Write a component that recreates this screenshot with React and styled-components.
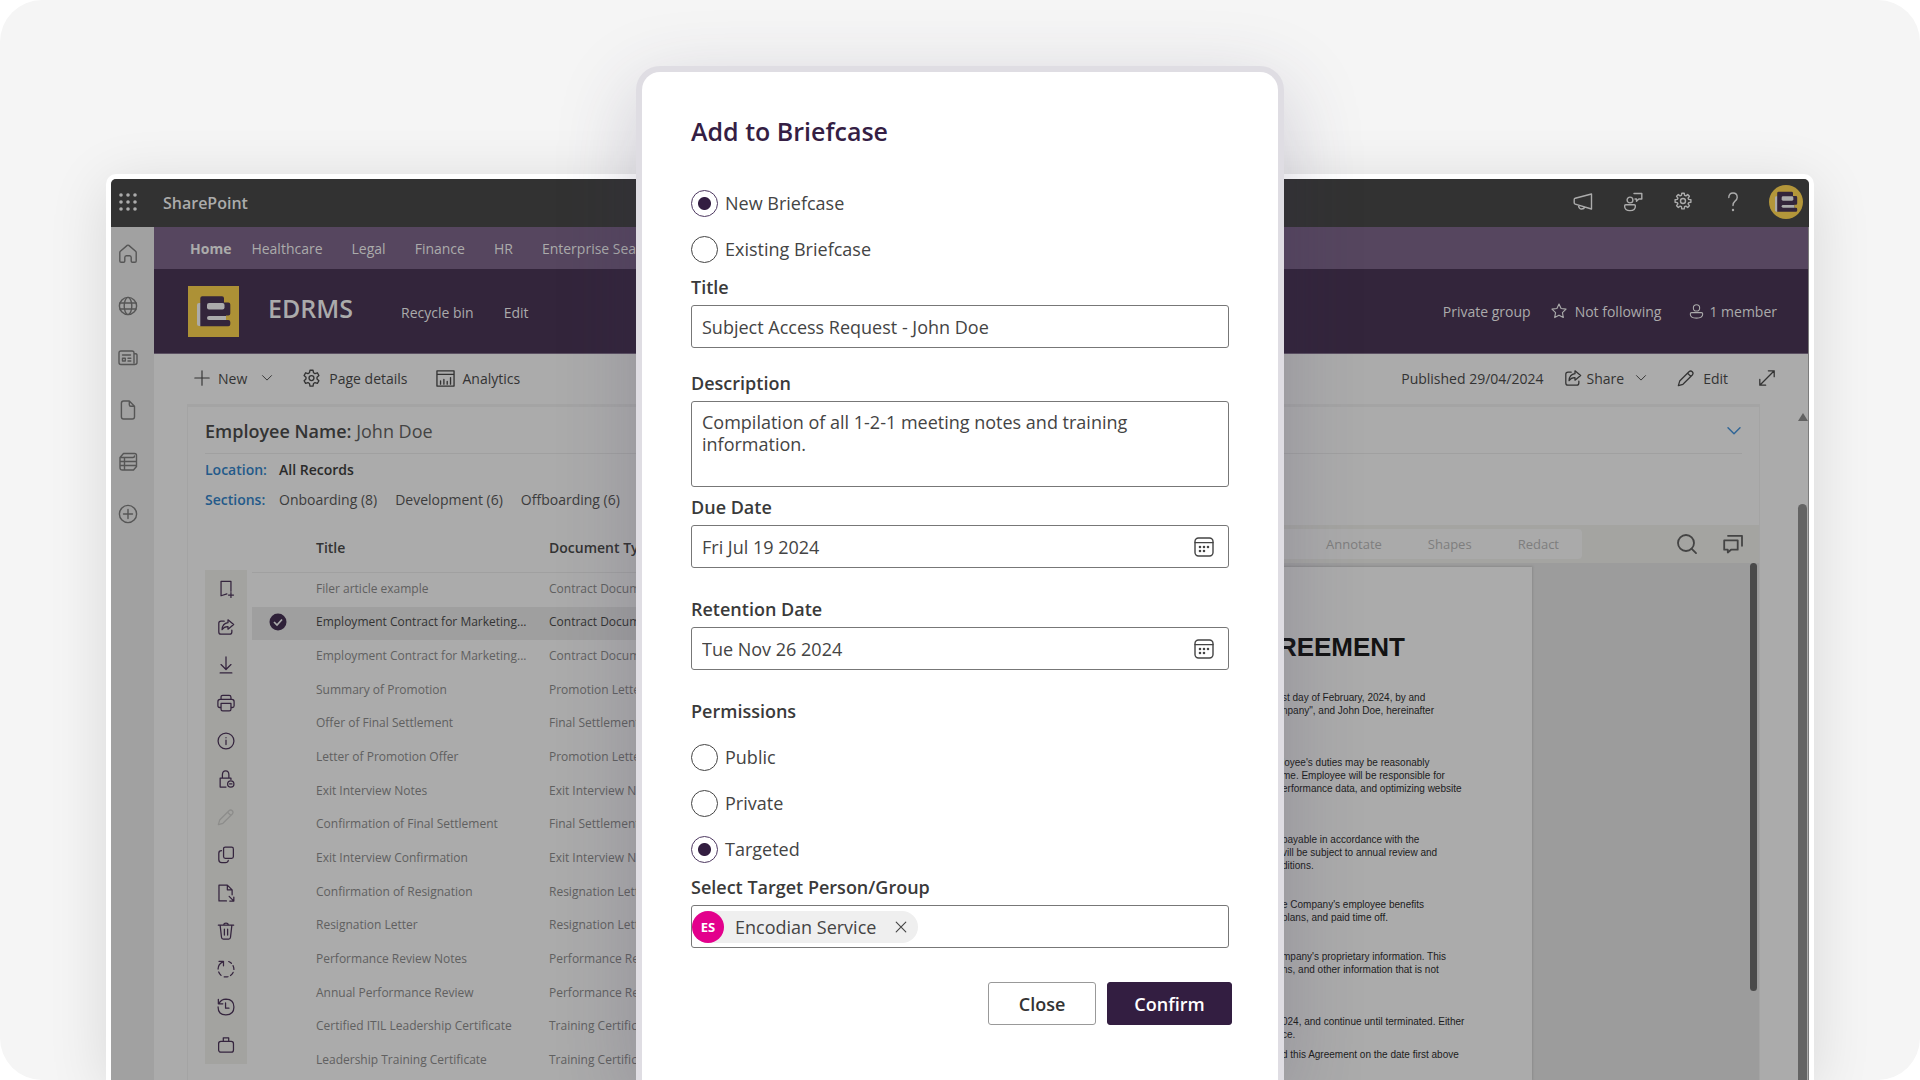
import { useState } from "react";
import styled, { createGlobalStyle } from "styled-components";

const GlobalStyle = createGlobalStyle`
    *, *::before, *::after { box-sizing: border-box; }
    body {
        margin: 0;
        background: #fff;
        font-family: "Open Sans", "Noto Sans", sans-serif;
        color: #333;
    }
    button, input, textarea { font: inherit; color: inherit; }
    a { color: inherit; text-decoration: none; }
    h1, h2, p, fieldset { margin: 0; padding: 0; border: 0; }
    svg { display: block; flex: none; }
`;

const Stage = styled.div`
    position: relative;
    display: flex;
    height: 100vh;
    padding: 174px 106px 0;
    overflow: hidden;
    border-radius: 42px;
    background: #f5f5f5;
`;

/* ---------- SharePoint window ---------- */

const Window = styled.div`
    flex: 1;
    min-width: 0;
    display: flex;
    flex-direction: column;
    border: 5px solid #fff;
    border-bottom: 0;
    border-radius: 10px 10px 0 0;
    background: #ababab;
    box-shadow: 0 10px 60px rgba(0, 0, 0, 0.12);
    overflow: hidden;
`;

const TopBar = styled.header`
    flex: none;
    display: flex;
    align-items: center;
    height: 48px;
    padding: 0 6px 2px 7px;
    background: #323232;
    color: #ababab;
`;

const Product = styled.a`
    margin: 2px auto 0 25px;
    font-size: 16px;
    font-weight: 600;
`;

const TopActions = styled.div`
    display: flex;
    align-items: center;
    gap: 30px;
    margin-right: 26px;
`;

const IconButton = styled.button`
    display: flex;
    padding: 0;
    border: 0;
    background: none;
    color: ${({ $muted }) => ($muted ? "#8d8d8b" : "inherit")};
`;

const Body = styled.div`
    flex: 1;
    min-height: 0;
    display: flex;
`;

const Rail = styled.nav`
    flex: none;
    width: 43px;
    display: flex;
    flex-direction: column;
    align-items: center;
    gap: 32px;
    padding: 17px 9px 0 0;
    background: #a1a1a1;
    color: #565656;
`;

const Main = styled.main`
    flex: 1;
    min-width: 0;
    display: flex;
    flex-direction: column;
    border-right: 1px solid #7c7c7c;
`;

const HubNav = styled.nav`
    flex: none;
    display: flex;
    align-items: center;
    gap: 20px;
    height: 42px;
    padding: 0 36px;
    background: #56465f;
    color: #ababab;
    font-size: 14px;
`;

const HubLink = styled.a`
    padding-right: ${({ $active }) => ($active ? 0 : 9)}px;
    font-weight: ${({ $active }) => ($active ? 700 : 400)};
`;

const SiteHeader = styled.div`
    flex: none;
    display: flex;
    align-items: center;
    height: 85px;
    padding: 0 31px 0 34px;
    border-bottom: 1px solid #5b5062;
    background: #33253b;
    color: #ababab;
    font-size: 14px;
`;

const SiteName = styled.h1`
    margin: 0 48px 6px 29px;
    font-size: 25px;
    line-height: 32px;
    font-weight: 600;
`;

const SiteLinks = styled.div`
    display: flex;
    gap: 30px;
    margin-right: auto;
    padding-top: 2px;
`;

const Meta = styled.span`
    display: flex;
    align-items: center;
    gap: ${({ $gap }) => $gap || 8}px;
    margin-left: ${({ $before }) => $before || 0}px;
`;

const CommandBar = styled.div`
    flex: none;
    display: flex;
    align-items: center;
    height: 50px;
    padding: 0 32px 2px 40px;
    font-size: 14px;
`;

const Command = styled.button`
    display: flex;
    align-items: center;
    gap: ${({ $gap }) => $gap || 8}px;
    margin-right: ${({ $after }) => $after || 0}px;
    padding: 0;
    border: 0;
    background: none;
`;

const Caret = styled.span`
    margin-left: 6px;
`;

const Published = styled.span`
    margin: 0 20px 0 auto;
`;

const Content = styled.div`
    flex: 1;
    min-height: 0;
    display: flex;
    justify-content: space-between;
    padding-left: 33px;
`;

const Card = styled.section`
    flex: 1;
    min-width: 0;
    margin-right: 37px;
    display: flex;
    flex-direction: column;
    border: solid #a4a4a4;
    border-width: 3px 1px 0;
`;

const PageScroll = styled.div`
    flex: none;
    width: 11px;
    display: flex;
    flex-direction: column;
    align-items: center;
    gap: 83px;
    padding-top: 9px;

    &::before {
        content: "";
        border: 5px solid transparent;
        border-top: 0;
        border-bottom: 8px solid #626262;
    }

    &::after {
        content: "";
        flex: 1;
        width: 9px;
        border-radius: 5px 5px 0 0;
        background: #646464;
    }
`;

const Employee = styled.div`
    flex: none;
    display: flex;
    align-items: center;
    justify-content: space-between;
    height: 47px;
    margin: 0 17px;
    padding-top: 1px;
    border-bottom: 1px solid #a0a0a0;
    font-size: 18px;
    color: #444;

    b { font-weight: 600; color: #333; }
`;

const Filters = styled.div`
    flex: none;
    display: grid;
    grid-template-columns: 74px 1fr;
    grid-auto-rows: 30px;
    align-items: center;
    height: 71px;
    padding: 0 17px;
    font-size: 14px;
    color: #3c3c3c;
`;

const FilterName = styled.span`
    font-weight: 600;
    color: #235a8a;
`;

const FilterValues = styled.div`
    display: flex;
    gap: 18px;

    b { font-weight: 600; color: #2a2a2a; }
`;

const Split = styled.div`
    flex: 1;
    min-height: 0;
    display: grid;
    grid-template-columns: 1fr 800px;
`;

const Records = styled.div`
    min-width: 0;
    display: flex;
    align-items: flex-start;
    padding-left: 17px;
    overflow: hidden;
`;

const Strip = styled.div`
    flex: none;
    display: grid;
    grid-auto-rows: 38px;
    place-items: center;
    width: 42px;
    margin: 45px 5px 0 0;
    background: #a3a3a0;
    color: #35253e;
`;

const Table = styled.table`
    flex: none;
    width: 720px;
    height: 553px;
    table-layout: fixed;
    border-collapse: collapse;
    font-size: 12px;
    line-height: 18px;
    color: #606060;

    th, td { padding: 0; text-align: left; white-space: nowrap; }
    td { padding-bottom: 2px; }
    th {
        height: 47px;
        border-bottom: 1px solid #a0a0a0;
        font-size: 14px;
        font-weight: 600;
        color: #333;
    }
    th:nth-child(1) { width: 64px; }
    th:nth-child(2) { width: 233px; }
`;

const Row = styled.tr`
    background: ${({ $selected }) => ($selected ? "#9f9f9f" : "none")};
    color: ${({ $selected }) => ($selected ? "#333" : "inherit")};
`;

const Tick = styled.span`
    display: flex;
    padding-left: 17px;
`;

/* ---------- document viewer ---------- */

const Viewer = styled.div`
    min-width: 0;
    display: flex;
    flex-direction: column;
    background: #9c9c9c;
`;

const ViewerBar = styled.div`
    flex: none;
    display: flex;
    align-items: center;
    gap: 26px;
    height: 38px;
    padding-right: 16px;
    background: #a4a4a1;
    color: #444;
`;

const Tabs = styled.div`
    display: flex;
    align-items: center;
    justify-content: flex-end;
    gap: 46px;
    width: 623px;
    height: 30px;
    margin-right: auto;
    padding-right: 23px;
    border-radius: 4px;
    background: #aaa;
    color: #7e7e7e;
    font-size: 13px;
`;

const Tab = styled.button`
    padding: 0;
    border: 0;
    background: none;
`;

const Canvas = styled.div`
    flex: 1;
    min-height: 0;
    display: flex;
    justify-content: space-between;
    padding-right: 2px;
    overflow: hidden;
`;

const Paper = styled.article`
    width: 573px;
    margin-top: 4px;
    padding: 64px 0 0 323px;
    background: #ababab;
    box-shadow: 0 0 2px 1px #8c8c8c;
    font: 10px/13px "Liberation Sans", Arial, sans-serif;
    color: #1c1c1c;
    white-space: nowrap;
`;

const PaperTitle = styled.h2`
    display: flex;
    justify-content: flex-end;
    width: 123px;
    margin-bottom: 28px;
    font-size: 26px;
    line-height: 32px;
    color: #131313;
`;

const Clause = styled.p`
    margin-bottom: ${({ $after }) => $after}px;
`;

const Thumb = styled.div`
    width: 7px;
    height: 428px;
    border-radius: 4px;
    background: #4a4a4a;
`;

/* ---------- dialog ---------- */

const Overlay = styled.div`
    position: absolute;
    inset: 0;
    display: flex;
    justify-content: center;
    padding-top: 66px;
`;

const Dialog = styled.form`
    width: 648px;
    padding: 39px 49px 0;
    border: 6px solid #dfdde3;
    border-bottom: 0;
    border-radius: 24px 24px 0 0;
    background: #fff;
    box-shadow: 0 24px 80px rgba(60, 50, 90, 0.22);
    font-size: 18px;
    color: #444;
`;

const DialogTitle = styled.h2`
    margin-bottom: 38px;
    font-size: 25px;
    line-height: 40px;
    font-weight: 600;
    color: #351e44;
`;

const Options = styled.fieldset`
    display: grid;
    grid-auto-rows: 28px;
    gap: 18px;
`;

const Option = styled.label`
    display: flex;
    align-items: center;
    gap: 7px;
    line-height: 28px;
`;

const Radio = styled.input`
    appearance: none;
    width: 27px;
    height: 27px;
    margin: 0;
    border: 1px solid #444;
    border-radius: 50%;

    &:checked {
        border-color: #4d3860;
        background: radial-gradient(circle, #331e41 6px, transparent 7px);
    }
`;

const Label = styled.label`
    display: block;
    margin-top: ${({ $before }) => $before}px;
    margin-bottom: ${({ $after }) => $after || 6}px;
    line-height: 24px;
    font-weight: 600;
    color: #3a3a3a;
`;

const Field = styled.div`
    display: flex;
    align-items: center;
    height: 43px;
    padding-right: ${({ $icon }) => ($icon ? 14 : 0)}px;
    border: 1px solid #777;
    border-radius: 3px;
`;

const TextInput = styled.input`
    flex: 1;
    min-width: 0;
    height: 100%;
    padding: 1px 10px 0;
    border: 0;
    outline: 0;
    background: none;
`;

const TextArea = styled.textarea`
    display: block;
    width: 100%;
    height: 86px;
    padding: 9px 10px;
    border: 1px solid #777;
    border-radius: 3px;
    outline: 0;
    background: none;
    line-height: 22px;
    resize: none;
`;

const Chip = styled.span`
    display: flex;
    align-items: center;
    height: 32px;
    padding-right: 9px;
    border-radius: 16px;
    background: #efefef;
`;

const Initials = styled.span`
    display: grid;
    place-items: center;
    width: 32px;
    height: 32px;
    margin-right: 11px;
    border-radius: 50%;
    background: #e3008c;
    color: #fff;
    font-size: 13px;
    font-weight: 700;
`;

const ChipName = styled.span`
    margin-right: 17px;
`;

const Buttons = styled.div`
    display: flex;
    justify-content: flex-end;
    gap: 11px;
    margin: 34px -3px 0 0;
`;

const Button = styled.button`
    width: ${({ $primary }) => ($primary ? 125 : 108)}px;
    height: 43px;
    border: 1px solid ${({ $primary }) => ($primary ? "#331e41" : "#999")};
    border-radius: 3px;
    background: ${({ $primary }) => ($primary ? "#331e41" : "#fff")};
    color: ${({ $primary }) => ($primary ? "#fff" : "#333")};
    font-weight: 600;
`;

/* ---------- icons, on a 20px grid ---------- */

function Icon({ size = 20, weight = 1.4, children }) {
    return (
        <svg width={size} height={size} viewBox="0 0 20 20" fill="none" stroke="currentColor" strokeWidth={weight} strokeLinecap="round" strokeLinejoin="round" aria-hidden="true">
            {children}
        </svg>
    );
}

const waffle = [3, 10, 17].flatMap((y) => [3, 10, 17].map((x) => <circle key={`${x}-${y}`} cx={x} cy={y} r="1.8" fill="currentColor" />));
const gear = (
    <>
        <path d="M8.4 1.3h3.2l.5 2.6 1.6.9 2.5-.8 1.6 2.8-2 1.8v2l2 1.8-1.6 2.8-2.5-.8-1.6.9-.5 2.7H8.4l-.5-2.7-1.6-.9-2.5.8-1.6-2.8 2-1.8v-2l-2-1.8 1.6-2.8 2.5.8 1.6-.9z" />
        <circle cx="10" cy="9.6" r="2.6" />
    </>
);
const cog = (
    <>
        <path d="M8.8 1.2h2.4l.4 2.2 1.3.5 1.8-1.3 1.7 1.7-1.3 1.8.6 1.3 2.2.4v2.4l-2.2.4-.6 1.3 1.3 1.8-1.7 1.7-1.8-1.3-1.3.6-.4 2.2H8.8l-.4-2.2-1.3-.6-1.8 1.3-1.7-1.7 1.3-1.8-.6-1.3-2.2-.4V7.8l2.2-.4.6-1.3-1.3-1.8 1.7-1.7 1.8 1.3 1.3-.5z" />
        <circle cx="10" cy="9" r="2.5" />
    </>
);
const home = <path d="M1.8 8.5q0-.8.6-1.3L9.2 1.4q.8-.6 1.6 0l6.8 5.8q.6.5.6 1.3v8.5q0 1.3-1.3 1.3h-2.5q-1.2 0-1.2-1.2v-3.5q0-1.8-1.6-1.8H8.4q-1.6 0-1.6 1.8v3.5q0 1.2-1.2 1.2H3.1q-1.3 0-1.3-1.3z" />;
const globe = (
    <>
        <circle cx="10" cy="10" r="8.6" />
        <ellipse cx="10" cy="10" rx="3.8" ry="8.6" />
        <path d="M2 7h16M2 13h16" />
    </>
);
const news = (
    <>
        <path d="M16 15V5q0-2-2-2H3Q1 3 1 5v9.5q0 2 2 2h13.5q2.5 0 2.5-2V7q0-1.500-3-1.500M4.500 7h8M10 10.200h2.800M10 13h2.800" />
        <path d="M4.500 10.200h2.800V13H4.500z" />
    </>
);
const file = <path d="M5.5 1h5.8L16.5 6.200v10.600q0 2.200-2.200 2.200H5.600q-2.200 0-2.200-2.200V3.200Q3.400 1 5.500 1zM11.300 1v3.700q0 1.500 1.500 1.500h3.700" />;
const list = <path d="M2 5.500 5.500 1.500h11q2 0 2 2v11L15.500 18H4.500Q2 18 2 15.500zM2 5.500h13q1.500 0 1.500-1.500M2 9.500h16.500M2 13.500h16.500M6.500 5.500V18" />;
const addCircle = (
    <>
        <circle cx="10" cy="10" r="8.6" />
        <path d="M10 5.500v9M5.500 10h9" />
    </>
);
const share = <path d="M8 3.500H4.500q-2.500 0-2.500 2.500v9.500Q2 18 4.500 18h9.500q2.500 0 2.500-2.500V13.500M12.200 2l6.300 5.200-6.300 5.200V9.500Q8 9.300 5.600 13 6 6 12.200 5.200z" />;
const pencil = <path d="M13.300 3 3 13.400 1.500 18.500l5.100-1.500L17 6.700q1.700-1.900 0-3.600-1.800-1.700-3.700-.1zM11.800 4.700l3.500 3.500" />;
const expand = <path d="M2 18 18 2M11.500 2H18v6.500M8.500 18H2v-6.500" />;
const chevron = <path d="m2.500 6 7.500 7.500L17.500 6" />;
const close = <path d="m4 4 12 12M16 4 4 16" />;
const megaphone = <path d="M1.200 7.500v3.300q0 1 1 1.300L18.500 17V2L2.200 6.200q-1 .3-1 1.300zM5.500 13.200q.2 3.800 3.200 3.800 2.500 0 3-2" />;
const personChat = (
    <>
        <circle cx="7" cy="8" r="2.9" />
        <path d="M2.800 12.800h8.400q1.200 0 1.200 1.200 0 4.600-5.400 4.600T1.600 14q0-1.200 1.200-1.200zM11 1.500h7.800V7h-3l-2.300 2.200V7H12" />
    </>
);
const help = (
    <>
        <path d="M5.800 5.500Q5.800 1 10 1t4.200 4.400q0 2-2.200 3.700-2 1.600-2 4.400" />
        <circle cx="10" cy="18" r=".5" fill="currentColor" />
    </>
);
const star = <path d="m10 1.200 2.600 5.700 6.200.8-4.500 4.300 1.100 6.200L10 15.200l-5.400 3 1.100-6.200L1.200 7.700l6.200-.8z" />;
const person = (
    <>
        <circle cx="10" cy="5.2" r="4.2" />
        <path d="M3.500 11.500h13q1.800 0 1.800 1.800 0 5.500-8.300 5.500t-8.300-5.500q0-1.800 1.800-1.800z" />
    </>
);
const chart = <path d="M1 2h18v16H1zM1 5.700h18M4.800 16v-3.500M8.300 16v-5M11.800 16v-3M15.300 16V9" />;
const search = (
    <>
        <circle cx="9" cy="9" r="8" />
        <path d="m14.500 14.700 4.500 4.500" />
    </>
);
const comments = <path d="M1.200 6.300h13.500v9.400H8l-3.200 2.800v-2.800H1.200zM5 1.800h14v10" />;
const calendar = (
    <>
        <rect x="1" y="1" width="18" height="18" rx="3.5" />
        <path d="M1 5.600h18" />
        {[[6, 10], [10, 10], [14, 10], [6, 14], [10, 14]].map(([x, y]) => <circle key={`${x}-${y}`} cx={x} cy={y} r=".6" fill="currentColor" />)}
    </>
);

const railIcons = [["Home", home], ["Sites", globe], ["News", news], ["Files", file], ["Lists", list], ["Create", addCircle]];

const stripIcons = [
    ["Bookmark", <path d="M11 15.500 4.500 17.500V1.500h11v11M15.500 14v5.500M12.800 16.800h5.500" />],
    ["Share", share],
    ["Download", <path d="M10 1v13.500M4.500 9.500 10 15l5.500-5.500M3.500 18.800h13" />],
    ["Print", <path d="M4.500 6V3.500Q4.500 1.500 6.500 1.500h7q2 0 2 2V6M4.500 15H3q-2 0-2-2V8.500Q1 6 3.500 6h13Q19 6 19 8.500V13q0 2-2 2h-1.500M4.500 10.500h11V17q0 1.800-1.800 1.800H6.300Q4.500 18.800 4.500 17z" />],
    ["Details", <><circle cx="10" cy="10" r="8.8" /><path d="M10 9v5M10 6.200v.2" /></>],
    ["Lock", <><path d="M10 19H3.500V9h12v1.500M6 9V5.500Q6 1 9.600 1T13.200 5.500V9" /><circle cx="15.3" cy="15.5" r="3.5" /><path d="M14 15.500h2.600" /></>],
    ["Edit", pencil, true],
    ["Copy", <path d="M9.300 1.200h6.900q2 0 2 2v8.600q0 2-2 2H9.300q-2 0-2-2V3.200q0-2 2-2zM5 5.200q-3 0-3 3V15q0 3.500 3.300 3.500h4q2.800 0 3.200-2.400" />],
    ["Move", <path d="M10.500 18.800H2.200V1.200h9.300L16.800 6.500V12M11.500 1.200v5.300h5.300M13.500 13.800l5 5M18.700 14.500v4.500h-4.500" />],
    ["Delete", <path d="M1.500 3.500h17M7.300 3.300Q7.600 1.200 10 1.200t2.700 2.100M3.500 3.800 5 17q.2 2 2 2h6q1.800 0 2-2L16.500 3.800M8.200 8v6.500M11.800 8v6.500" />],
    ["Workflow", <path d="M7.200 6.500V1.500H2.200M7 1.800Q1.200 4.500 1.200 10M1.900 13.300q.9 2.300 2.600 3.800M8 18.700q2.200.4 4.200-.1M15 17.200q2-1.400 2.900-3.400M18.800 10.500q0-2.300-.9-4.200M16 3.700Q14.600 2.400 13 1.700" />],
    ["History", <path d="M1.500 1.500v5h5M2 6.300Q4.600 1.200 10 1.200q8.800.2 8.800 8.800T10 18.800 1.200 10M9.500 5.500v5.800h3.800" />],
    ["Briefcase", <><rect x="1.8" y="6" width="16.5" height="12" rx="2.5" /><path d="M7 6V2h6v4" /></>],
];

function Brand({ size, round }) {
    return (
        <svg width={size} height={size} viewBox="0 0 51 51" role="img" aria-label="EDRMS logo">
            {round ? <circle cx="25.5" cy="25.5" r="25.5" fill="#b3963a" /> : <rect width="51" height="51" fill="#ad9136" />}
            <path d="M9 19q0-2 2-2h3v23h-3q-2 0-2-2z" fill="#ababab" />
            <path d="M12.300 12.300q0-2 2-2H34q2 0 2 2v4.300h4.300q2 0 2 2v9q0 2-2 2H38V34h2.300q2 0 2 2v2.200q0 2-2 2h-28z" fill="#33253b" />
            <rect x="19" y="17" width="17.5" height="6.5" rx="2" fill="#ababab" />
            <path d="M21 30h17v4H21q-2 0-2-2 0-2 2-2z" fill="#ababab" />
        </svg>
    );
}

/* ---------- data ---------- */

const records = [
    ["Filer article example", "Contract Document"],
    ["Employment Contract for Marketing...", "Contract Document"],
    ["Employment Contract for Marketing...", "Contract Document"],
    ["Summary of Promotion", "Promotion Letter"],
    ["Offer of Final Settlement", "Final Settlement"],
    ["Letter of Promotion Offer", "Promotion Letter"],
    ["Exit Interview Notes", "Exit Interview Notes"],
    ["Confirmation of Final Settlement", "Final Settlement"],
    ["Exit Interview Confirmation", "Exit Interview Notes"],
    ["Confirmation of Resignation", "Resignation Letter"],
    ["Resignation Letter", "Resignation Letter"],
    ["Performance Review Notes", "Performance Review"],
    ["Annual Performance Review", "Performance Review"],
    ["Certified ITIL Leadership Certificate", "Training Certificate"],
    ["Leadership Training Certificate", "Training Certificate"],
];

// space below each clause, then its lines
const clauses = [
    [39, ["st day of February, 2024, by and", 'npany", and John Doe, hereinafter']],
    [38, ["loyee's duties may be reasonably", "me. Employee will be responsible for", "erformance data, and optimizing website"]],
    [26, ["payable in accordance with the", "vill be subject to annual review and", "ditions."]],
    [26, ["e Company's employee benefits", "plans, and paid time off."]],
    [39, ["mpany's proprietary information. This", "ns, and other information that is not"]],
    [7, ["024, and continue until terminated. Either", "ce."]],
    [0, ["d this Agreement on the date first above"]],
];

function SiteWindow() {
    return (
        <Window>
            <TopBar>
                <IconButton aria-label="App launcher"><Icon weight={0}>{waffle}</Icon></IconButton>
                <Product href="#">SharePoint</Product>
                <TopActions>
                    <IconButton aria-label="Announcements"><Icon>{megaphone}</Icon></IconButton>
                    <IconButton aria-label="Feedback"><Icon>{personChat}</Icon></IconButton>
                    <IconButton aria-label="Settings"><Icon>{cog}</Icon></IconButton>
                    <IconButton aria-label="Help"><Icon>{help}</Icon></IconButton>
                </TopActions>
                <IconButton aria-label="Account"><Brand size={34} round /></IconButton>
            </TopBar>
            <Body>
                <Rail>
                    {railIcons.map(([name, icon]) => (
                        <IconButton key={name} aria-label={name}><Icon>{icon}</Icon></IconButton>
                    ))}
                </Rail>
                <Main>
                    <HubNav>
                        <HubLink href="#" $active>Home</HubLink>
                        <HubLink href="#">Healthcare</HubLink>
                        <HubLink href="#">Legal</HubLink>
                        <HubLink href="#">Finance</HubLink>
                        <HubLink href="#">HR</HubLink>
                        <HubLink href="#">Enterprise Search</HubLink>
                    </HubNav>
                    <SiteHeader>
                        <Brand size={51} />
                        <SiteName>EDRMS</SiteName>
                        <SiteLinks>
                            <a href="#">Recycle bin</a>
                            <a href="#">Edit</a>
                        </SiteLinks>
                        <Meta>Private group</Meta>
                        <Meta $before={20}><Icon size={16}>{star}</Icon>Not following</Meta>
                        <Meta $before={28} $gap={5}><Icon size={15}>{person}</Icon>1 member</Meta>
                    </SiteHeader>
                    <CommandBar>
                        <Command $after={29}>
                            <Icon size={16}><path d="M10 1v18M1 10h18" /></Icon>New<Caret><Icon size={12} weight={1.6}>{chevron}</Icon></Caret>
                        </Command>
                        <Command $after={28}><Icon size={19}>{gear}</Icon>Page details</Command>
                        <Command><Icon size={19}>{chart}</Icon>Analytics</Command>
                        <Published>Published 29/04/2024</Published>
                        <Command $gap={5} $after={30}>
                            <Icon size={18}>{share}</Icon>Share<Caret><Icon size={12} weight={1.6}>{chevron}</Icon></Caret>
                        </Command>
                        <Command $after={30}><Icon size={18}>{pencil}</Icon>Edit</Command>
                        <IconButton aria-label="Expand"><Icon size={18}>{expand}</Icon></IconButton>
                    </CommandBar>
                    <Content>
                        <Card>
                            <Employee>
                                <span><b>Employee Name:</b> John Doe</span>
                                <IconButton aria-label="Collapse"><Icon size={16} weight={1.8}><g stroke="#2f6596">{chevron}</g></Icon></IconButton>
                            </Employee>
                            <Filters>
                                <FilterName>Location:</FilterName>
                                <FilterValues><b>All Records</b></FilterValues>
                                <FilterName>Sections:</FilterName>
                                <FilterValues>
                                    <a href="#">Onboarding (8)</a>
                                    <a href="#">Development (6)</a>
                                    <a href="#">Offboarding (6)</a>
                                </FilterValues>
                            </Filters>
                            <Split>
                                <Records>
                                    <Strip>
                                        {stripIcons.map(([name, icon, muted]) => (
                                            <IconButton key={name} aria-label={name} $muted={muted}><Icon size={18}>{icon}</Icon></IconButton>
                                        ))}
                                    </Strip>
                                    <Table>
                                        <thead>
                                            <tr><th aria-label="Selected" /><th>Title</th><th>Document Type</th></tr>
                                        </thead>
                                        <tbody>
                                            {records.map(([title, type], i) => (
                                                <Row key={i} $selected={i === 1}>
                                                    <td>
                                                        {i === 1 && (
                                                            <Tick>
                                                                <svg width="18" height="18" viewBox="0 0 18 18" aria-label="Selected">
                                                                    <circle cx="9" cy="9" r="8.5" fill="#2f2139" />
                                                                    <path d="m5 9 3 3 5-5.500" fill="none" stroke="#ababab" strokeWidth="1.7" />
                                                                </svg>
                                                            </Tick>
                                                        )}
                                                    </td>
                                                    <td>{title}</td>
                                                    <td>{type}</td>
                                                </Row>
                                            ))}
                                        </tbody>
                                    </Table>
                                </Records>
                                <Viewer>
                                    <ViewerBar>
                                        <Tabs>
                                            <Tab>Annotate</Tab>
                                            <Tab>Shapes</Tab>
                                            <Tab>Redact</Tab>
                                        </Tabs>
                                        <IconButton aria-label="Search"><Icon weight={1.8}>{search}</Icon></IconButton>
                                        <IconButton aria-label="Comments"><Icon weight={1.8}>{comments}</Icon></IconButton>
                                    </ViewerBar>
                                    <Canvas>
                                        <Paper>
                                            <PaperTitle>AGREEMENT</PaperTitle>
                                            {clauses.map(([after, lines]) => (
                                                <Clause key={lines[0]} $after={after}>
                                                    {lines.map((line) => <span key={line}>{line}<br /></span>)}
                                                </Clause>
                                            ))}
                                        </Paper>
                                        <Thumb />
                                    </Canvas>
                                </Viewer>
                            </Split>
                        </Card>
                        <PageScroll />
                    </Content>
                </Main>
            </Body>
        </Window>
    );
}

function BriefcaseDialog() {
    const [target, setTarget] = useState("new");
    const [access, setAccess] = useState("Targeted");

    return (
        <Dialog role="dialog" aria-labelledby="dialog-title" onSubmit={(e) => e.preventDefault()}>
            <DialogTitle id="dialog-title">Add to Briefcase</DialogTitle>
            <Options aria-label="Briefcase">
                <Option><Radio type="radio" name="target" checked={target === "new"} onChange={() => setTarget("new")} />New Briefcase</Option>
                <Option><Radio type="radio" name="target" checked={target === "existing"} onChange={() => setTarget("existing")} />Existing Briefcase</Option>
            </Options>

            <Label htmlFor="title" $before={12}>Title</Label>
            <Field><TextInput id="title" defaultValue="Subject Access Request - John Doe" /></Field>

            <Label htmlFor="description" $before={23}>Description</Label>
            <TextArea id="description" defaultValue="Compilation of all 1-2-1 meeting notes and training information." />

            <Label htmlFor="due" $before={8}>Due Date</Label>
            <Field $icon>
                <TextInput id="due" defaultValue="Fri Jul 19 2024" />
                <IconButton type="button" aria-label="Pick due date"><Icon>{calendar}</Icon></IconButton>
            </Field>

            <Label htmlFor="retention" $before={29}>Retention Date</Label>
            <Field $icon>
                <TextInput id="retention" defaultValue="Tue Nov 26 2024" />
                <IconButton type="button" aria-label="Pick retention date"><Icon>{calendar}</Icon></IconButton>
            </Field>

            <Label as="p" id="permissions" $before={29} $after={20}>Permissions</Label>
            <Options aria-labelledby="permissions">
                {["Public", "Private", "Targeted"].map((name) => (
                    <Option key={name}>
                        <Radio type="radio" name="access" checked={access === name} onChange={() => setAccess(name)} />
                        {name}
                    </Option>
                ))}
            </Options>

            <Label htmlFor="people" $before={12}>Select Target Person/Group</Label>
            <Field>
                <Chip>
                    <Initials>ES</Initials>
                    <ChipName>Encodian Service</ChipName>
                    <IconButton type="button" aria-label="Remove Encodian Service"><Icon size={16}>{close}</Icon></IconButton>
                </Chip>
                <TextInput id="people" />
            </Field>

            <Buttons>
                <Button type="button">Close</Button>
                <Button type="submit" $primary>Confirm</Button>
            </Buttons>
        </Dialog>
    );
}

export default function App() {
    return (
        <Stage>
            <GlobalStyle />
            <SiteWindow />
            <Overlay>
                <BriefcaseDialog />
            </Overlay>
        </Stage>
    );
}
